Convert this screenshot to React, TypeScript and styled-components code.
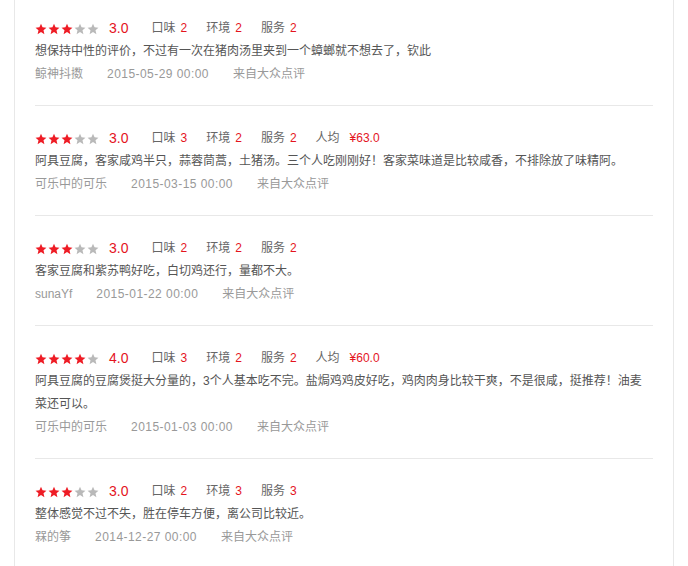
import React from "react"
import styled, { createGlobalStyle } from "styled-components"

interface Review {
    score: number,
    taste: number,
    env: number,
    service: number,
    price?: string,
    text: string,
    user: string,
    date: string,
}

const reviews: Review[] = [
    {
        score: 3, taste: 2, env: 2, service: 2,
        text: '想保持中性的评价，不过有一次在猪肉汤里夹到一个蟑螂就不想去了，钦此',
        user: '鲸神抖擞', date: '2015-05-29 00:00',
    },
    {
        score: 3, taste: 3, env: 2, service: 2, price: '¥63.0',
        text: '阿具豆腐，客家咸鸡半只，蒜蓉茼蒿，土猪汤。三个人吃刚刚好！客家菜味道是比较咸香，不排除放了味精阿。',
        user: '可乐中的可乐', date: '2015-03-15 00:00',
    },
    {
        score: 3, taste: 2, env: 2, service: 2,
        text: '客家豆腐和紫苏鸭好吃，白切鸡还行，量都不大。',
        user: 'sunaYf', date: '2015-01-22 00:00',
    },
    {
        score: 4, taste: 3, env: 2, service: 2, price: '¥60.0',
        text: '阿具豆腐的豆腐煲挺大分量的，3个人基本吃不完。盐焗鸡鸡皮好吃，鸡肉肉身比较干爽，不是很咸，挺推荐！油麦菜还可以。',
        user: '可乐中的可乐', date: '2015-01-03 00:00',
    },
    {
        score: 3, taste: 2, env: 3, service: 3,
        text: '整体感觉不过不失，胜在停车方便，离公司比较近。',
        user: '槑的筝', date: '2014-12-27 00:00',
    },
]

const Star = (props: { on: boolean }) => (
    <svg width="12" height="12" viewBox="0 0 24 24">
        <path
            d="M12 1.5l3.1 7.2 7.8.7-5.9 5.2 1.8 7.7L12 18.2l-6.8 4.1 1.8-7.7L1.1 9.4l7.8-.7z"
            fill={props.on ? '#ee1c25' : '#b9b9b9'}
        />
    </svg>
)

const Stars = (props: { score: number }) => (
    <StarRow>
        {[1, 2, 3, 4, 5].map(i => <Star key={i} on={i <= props.score} />)}
    </StarRow>
)

const ReviewItem = (props: { r: Review }) => {
    const r = props.r
    return (
        <Item>
            <RatingRow>
                <Stars score={r.score} />
                <Score>{r.score.toFixed(1)}</Score>
                <Detail>口味<Num>{r.taste}</Num></Detail>
                <Detail>环境<Num>{r.env}</Num></Detail>
                <Detail>服务<Num>{r.service}</Num></Detail>
                {r.price && <Detail>人均<Num $wide>{r.price}</Num></Detail>}
            </RatingRow>
            <Content>{r.text}</Content>
            <Meta>
                <span>{r.user}</span>
                <DateText>{r.date}</DateText>
                <span>来自大众点评</span>
            </Meta>
        </Item>
    )
}

export default function App() {
    return (
        <>
            <GlobalStyle />
            <Page>
                <Panel>
                    {reviews.map((r, i) => <ReviewItem key={i} r={r} />)}
                </Panel>
            </Page>
        </>
    )
}

const GlobalStyle = createGlobalStyle`
    body {
        margin: 0;
        background: #fff;
        font-family: "Liberation Sans", "Noto Sans CJK SC", sans-serif;
        font-size: 12px;
        color: #666;
    }
`

const Page = styled.div`
    padding: 0 14px;
    height: 566px;
    overflow: hidden;
`

const Panel = styled.div`
    margin-top: -4px;
    border-left: 1px solid #e8e8e8;
    border-right: 1px solid #e8e8e8;
    padding: 0 20px;
`

const Item = styled.div`
    padding: 21px 0 19px;
    border-bottom: 1px solid #e8e8e8;
    line-height: 23px;

    &:last-child {
        border-bottom: none;
    }
`

const RatingRow = styled.div`
    display: flex;
    align-items: center;
    height: 23px;
`

const StarRow = styled.div`
    display: flex;
    gap: 1px;
    margin-right: 10px;
`

const Score = styled.span`
    font-size: 14px;
    color: #e4141e;
    margin-right: 23px;
`

const Detail = styled.span`
    color: #666;
    margin-right: 19px;
`

const Num = styled.span<{ $wide?: boolean }>`
    color: #e4141e;
    margin-left: ${p => (p.$wide ? '10px' : '5px')};
`

const Content = styled.div`
    color: #555;
    padding-right: 8px;
`

const Meta = styled.div`
    display: flex;
    gap: 24px;
    color: #999;
`

const DateText = styled.span`
    letter-spacing: 0.45px;
`
